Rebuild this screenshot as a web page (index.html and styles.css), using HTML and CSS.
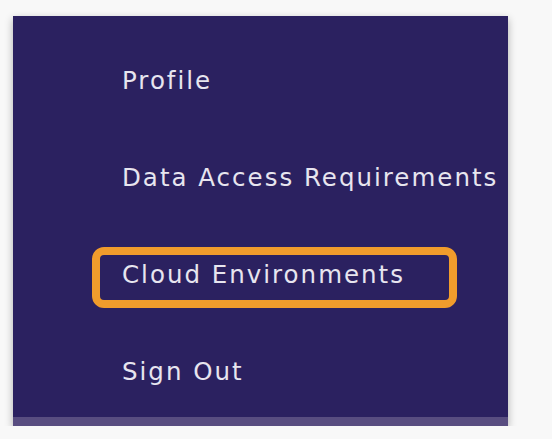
FILE: index.html
```html
<!DOCTYPE html>
<html lang="en">
<head>
    <meta charset="UTF-8">
    <meta name="viewport" content="width=device-width, initial-scale=1.0">
    <title>Account Menu</title>
    <link rel="stylesheet" href="styles.css">
</head>
<body>
    <div class="menu-panel">
        <nav class="menu-list">
            <a class="menu-item" href="#">Profile</a>
            <a class="menu-item" href="#">Data Access Requirements</a>
            <a class="menu-item active" href="#">Cloud Environments</a>
            <a class="menu-item" href="#">Sign Out</a>
        </nav>
        <div class="menu-footer"></div>
    </div>
</body>
</html>
```
FILE: styles.css
```css
/* Global Styles */
body {
    margin: 0;
    padding: 16px 0 0 13px;
    background-color: #f8f8f8;
    font-family: "DejaVu Sans", Inter, sans-serif;
}

/* Panel */
.menu-panel {
    width: 495px;
    background-color: #2b2160;
    box-shadow: 0 3px 8px rgba(0, 0, 0, 0.3);
}

.menu-list {
    display: flex;
    flex-direction: column;
    gap: 36px;
    padding: 37px 0 12px 79px;
}

.menu-item {
    display: block;
    box-sizing: border-box;
    width: 365px;
    height: 61px;
    padding: 0 0 5px 22px;
    border: 8px solid transparent;
    border-radius: 12px;
    color: #e7e5ef;
    font-size: 24.5px;
    letter-spacing: 2px;
    line-height: 40px;
    text-decoration: none;
    white-space: nowrap;
}

.menu-item.active {
    border-color: #f19c2c;
}

.menu-footer {
    height: 9px;
    background-color: #584d80;
}
```
